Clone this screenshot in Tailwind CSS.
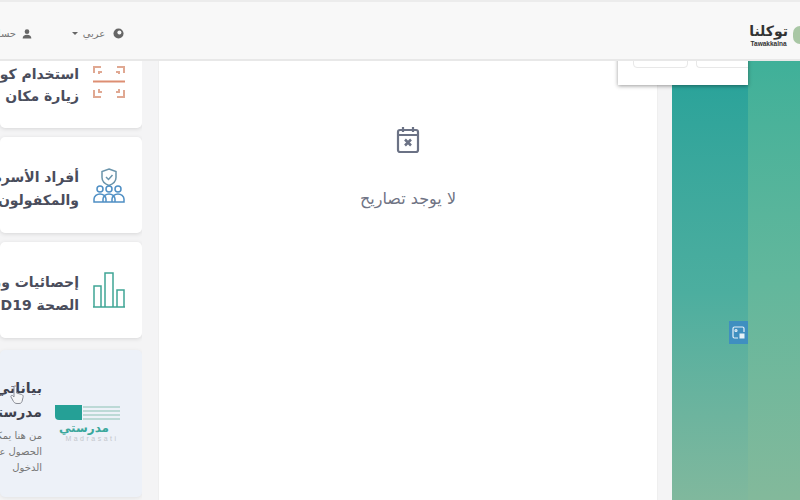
<!DOCTYPE html>
<html lang="ar">

<head>
  <meta charset="UTF-8" />
  <title>Tawakkalna</title>
  <script src="https://cdn.jsdelivr.net/npm/@tailwindcss/browser@4"></script>
</head>

<body class="w-[800px] h-[500px] overflow-hidden bg-[#f4f4f5] font-['DejaVu_Sans',sans-serif] relative">

  <!-- Header -->
  <header class="relative z-20 h-[61px] bg-[#f8f8f8] border-t-2 border-b-2 border-t-[#ececec] border-b-[#e8e8e8] flex items-center justify-between overflow-hidden pt-[6px]">
    <div class="flex items-center gap-[40px] -ml-[1px] text-[10px] text-[#777]">
      <div class="flex items-center gap-[6px] w-[33px] justify-end">
        <span dir="rtl" class="whitespace-nowrap overflow-hidden w-[16px]">حساب</span>
        <svg class="w-[10px] h-[10px] shrink-0" viewBox="0 0 12 12" fill="#666"><circle cx="6" cy="3.2" r="2.8" /><path d="M.8 11.500c0-3 2-4.500 5.200-4.500s5.200 1.500 5.200 4.500z" /></svg>
      </div>
      <div class="flex items-center gap-[4px]">
        <span class="w-0 h-0 border-x-[3px] border-x-transparent border-t-[3px] border-t-[#666]"></span>
        <span class="w-[24px] text-center">عربي</span>
        <svg class="w-[11px] h-[11px] ml-[3px]" viewBox="0 0 12 12"><circle cx="6" cy="6" r="5.500" fill="#666" /><circle cx="7" cy="5" r="2.200" fill="#f8f8f8" /></svg>
      </div>
    </div>
    <div class="flex items-center gap-[5px] -mr-[7px] mt-[3px]">
      <div class="flex flex-col items-center text-[#333]">
        <span class="text-[14px] leading-[18px] font-bold">توكلنا</span>
        <span class="text-[6.500px] leading-[8px] font-bold font-['Liberation_Sans',sans-serif]">Tawakkalna</span>
      </div>
      <span class="w-[14px] h-[18px] rounded-full bg-[#a9c7a5]"></span>
    </div>
  </header>

  <!-- Popup under the header -->
  <div class="absolute z-10 left-[618px] top-[50px] w-[130px] h-[35px] bg-white shadow-[0_1px_4px_rgba(0,0,0,0.4)] flex items-end gap-[8px] pl-[15px] pb-[17px] overflow-hidden">
    <span class="w-[55px] h-[10px] shrink-0 rounded-b-[4px] border border-[#e8e8e8]"></span>
    <span class="w-[60px] h-[10px] shrink-0 rounded-bl-[4px] border-l border-b border-[#e8e8e8]"></span>
  </div>

  <div class="flex h-[439px]">

    <!-- Services column -->
    <aside class="w-[142px] shrink-0 flex flex-col overflow-hidden pb-[3px]">
      <div class="-mt-[29px] h-[96px] shrink-0 mb-[9px] bg-white rounded-[5px] shadow-[0_1px_4px_rgba(0,0,0,0.12)] flex items-center justify-end gap-[14px] pr-[17px]">
        <div dir="rtl" class="w-[120px] mt-[9px] shrink-0 text-[14px] leading-[22px] font-bold text-[#4a4d5c] whitespace-nowrap overflow-hidden">استخدام كود<br />زيارة مكان التجمع</div>
        <svg class="w-[32px] h-[36px] mt-[5px] shrink-0" viewBox="0 0 32 36" fill="none" stroke="#e0a892" stroke-width="2">
          <path d="M1 8V2h7M24 2h7v6M6 9V7h3M23 7h3v2" />
          <path d="M0 16.500h32" stroke="#dd8e72" />
          <path d="M1 25v7h7M24 32h7v-7M6 24v3h3M23 27h3v-3" />
        </svg>
      </div>
      <div class="h-[96px] shrink-0 mb-[9px] bg-white rounded-[5px] shadow-[0_1px_4px_rgba(0,0,0,0.12)] flex items-center justify-end gap-[14px] pr-[17px]">
        <div dir="rtl" class="w-[120px] mt-[8px] shrink-0 text-[14px] leading-[23px] font-bold text-[#4a4d5c] whitespace-nowrap overflow-hidden">أفراد الأسرة<br />والمكفولون</div>
        <svg class="w-[32px] h-[36px] mt-[2px] shrink-0" viewBox="0 0 32 36" fill="none" stroke="#4f8fc4" stroke-width="1.500">
          <path d="M16 1l7 2.500v6c0 4-3 6.500-7 8-4-1.500-7-4-7-8v-6z" stroke="#6a94ab" />
          <path d="M13 9l2.500 2.500L19.500 7" stroke="#6a94ab" />
          <circle cx="7" cy="21" r="3" /><circle cx="16" cy="21" r="3" /><circle cx="25" cy="21" r="3" />
          <path d="M1 34v-3c0-3 3-5 6-5s6 2 6 5v3zM10 34v-3c0-3 3-5 6-5s6 2 6 5v3zM19 34v-3c0-3 3-5 6-5s6 2 6 5v3z" />
        </svg>
      </div>
      <div class="h-[96px] shrink-0 mb-[12px] bg-white rounded-[5px] shadow-[0_1px_4px_rgba(0,0,0,0.12)] flex items-center justify-end gap-[14px] pr-[17px]">
        <div dir="rtl" class="w-[120px] mt-[8px] shrink-0 text-[14px] leading-[23px] font-bold text-[#4a4d5c] whitespace-nowrap overflow-hidden">إحصائيات وزارة<br />الصحة <span dir="ltr">COVID19</span></div>
        <svg class="w-[32px] h-[36px] shrink-0" viewBox="0 0 32 36" fill="none" stroke="#3fa595" stroke-width="1.500">
          <path d="M1 35V14h7v21M12 35V1h8v34M24 35V18h7v17" />
          <path d="M0 35h32" />
        </svg>
      </div>
      <div class="h-[147px] shrink-0 bg-[#edf1f8] rounded-[5px] shadow-[0_1px_4px_rgba(0,0,0,0.08)] flex items-start justify-end gap-[13px] pr-[22px] relative">
        <div dir="rtl" class="w-[70px] shrink-0 mt-[26px] overflow-hidden whitespace-nowrap">
          <div class="text-[14px] leading-[24px] font-bold text-[#3f424f]">بياناتي في<br />مدرستي</div>
          <div class="mt-[4px] text-[10px] leading-[16px] text-[#777]">من هنا يمكنك<br />الحصول على<br />الدخول</div>
        </div>
        <div class="w-[65px] shrink-0 mt-[55px] flex flex-col items-center">
          <div class="flex items-center w-full gap-[1px]">
            <span class="w-[27px] h-[15px] bg-[#25a096] rounded-bl-[4px]"></span>
            <span class="flex-1 h-[15px] bg-[repeating-linear-gradient(0deg,#bcd9d6_0_2px,transparent_2px_4px)]"></span>
          </div>
          <span class="text-[12px] leading-[16px] font-bold text-[#3ba89c] -ml-[7px]">مدرستي</span>
          <span class="text-[7px] leading-[7px] tracking-[2.500px] text-[#c3c6cc] font-['Liberation_Sans',sans-serif] ml-[9px] -mt-[1px]">Madrasati</span>
        </div>
        <!-- pointer over the text -->
        <svg class="absolute left-[10px] top-[35px] w-[14px] h-[20px]" viewBox="0 0 14 20" fill="#f4f5f7" stroke="#8a8d96" stroke-width="1">
          <path d="M4 1.500c1-1 2.500-.5 2.500 1V8l5 1.500c1.500.5 2 1.500 1.500 3l-1 4c-.5 1.500-1.500 2-3 2H7c-1.500 0-2.500-.5-3.500-2L1 12c-.5-1 .5-2 1.500-1.500L4 12z" />
        </svg>
      </div>
    </aside>

    <!-- Messages panel -->
    <main class="ml-[16px] w-[500px] shrink-0 bg-white border-x border-[#efefef] flex flex-col items-center pt-[65px]">
      <svg class="w-[24px] h-[28px]" viewBox="0 0 24 28" fill="none" stroke="#6b7285" stroke-width="2.200">
        <rect x="2" y="4" width="20" height="22" rx="2" />
        <path d="M7 1v5M17 1v5M2 9h20" />
        <path d="M9 13.500l6 6M15 13.500l-6 6" stroke-width="2.500" />
      </svg>
      <p dir="rtl" class="mt-[33px] text-[16px] leading-[24px] text-[#6f7384]">لا يوجد تصاريح</p>
    </main>

    <!-- Green area -->
    <div class="ml-[14px] flex-1 flex -mt-[1px]">
      <div class="relative w-[76px] mt-[25px] h-[415px] bg-linear-to-b from-[#2ba39a] via-[#4cae9f] to-[#80b89d]">
        <div class="absolute right-0 top-[236px] w-[19px] h-[23px] bg-[#3f8fc0] flex items-center justify-center">
          <svg class="w-[13px] h-[13px]" viewBox="0 0 13 13" fill="none" stroke="#e8f2f8" stroke-width="1.200">
            <path d="M6 12H2.500A1.500 1.500 0 0 1 1 10.500v-8A1.500 1.500 0 0 1 2.500 1h8A1.500 1.500 0 0 1 12 2.500V6" />
            <circle cx="4" cy="4.500" r="1" />
            <rect x="7.500" y="7.500" width="5" height="5" fill="#e8f2f8" stroke="none" />
          </svg>
        </div>
      </div>
      <div class="flex-1 h-[440px] bg-linear-to-b from-[#3fb099] via-[#62b79c] to-[#83b99b]"></div>
    </div>
  </div>
</body>

</html>
